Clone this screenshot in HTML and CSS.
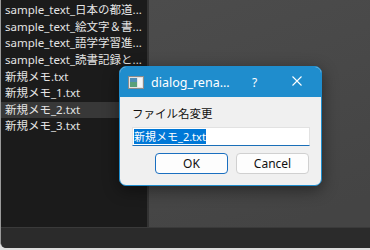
FILE: index.html
```html
<!DOCTYPE html>
<html lang="ja">
<head>
    <meta charset="UTF-8">
    <title>dialog_rename</title>
    <link rel="stylesheet" href="styles.css">
</head>
<body>
    <div class="window">
        <div class="main">
            <ul class="file-list">
                <li>sample_text_日本の都道...</li>
                <li>sample_text_絵文字＆書...</li>
                <li>sample_text_語学学習進...</li>
                <li>sample_text_読書記録と...</li>
                <li>新規メモ.txt</li>
                <li>新規メモ_1.txt</li>
                <li class="selected">新規メモ_2.txt</li>
                <li>新規メモ_3.txt</li>
            </ul>
            <div class="view"></div>
        </div>
        <div class="statusbar"></div>

        <div class="dialog">
            <div class="titlebar">
                <svg class="app-icon" width="16" height="13" viewBox="0 0 16 13">
                    <rect x="0.5" y="0.5" width="15" height="12" fill="#e4e4e4" stroke="#8c8c8c"/>
                    <rect x="2" y="2" width="7" height="9" fill="#5aa07a"/>
                    <rect x="2" y="2" width="7" height="4" fill="#4f8fb8"/>
                    <rect x="10" y="2" width="4" height="9" fill="#f6f6f6"/>
                </svg>
                <span class="title">dialog_rena...</span>
                <span class="help">?</span>
                <svg class="close" width="10" height="10" viewBox="0 0 10 10">
                    <path d="M0.5 0.5 L9.5 9.5 M9.5 0.5 L0.5 9.5" stroke="#fff" stroke-width="1.1"/>
                </svg>
            </div>
            <div class="dialog-body">
                <div class="label">ファイル名変更</div>
                <div class="input"><span class="sel">新規メモ_2.txt</span></div>
                <div class="buttons">
                    <button class="btn default">OK</button>
                    <button class="btn">Cancel</button>
                </div>
            </div>
        </div>
    </div>
</body>
</html>
```

FILE: styles.css
```css
* {
    box-sizing: border-box;
    margin: 0;
    padding: 0;
}

body {
    width: 370px;
    height: 250px;
    overflow: hidden;
    background: #dedede;
    font-family: "Noto Sans", "Noto Sans CJK JP", sans-serif;
}

.window {
    position: relative;
    width: 370px;
    height: 248px;
    display: flex;
    flex-direction: column;
    border-left: 1px solid #9a9a9a;
    border-bottom-left-radius: 6px;
    overflow: hidden;
    background: #2b2b2b;
}

.main {
    display: flex;
    height: 227px;
}

.file-list {
    list-style: none;
    width: 148px;
    padding-top: 2px;
    background: #1b1b1b;
    border-right: 2px solid #333;
}

.file-list li {
    height: 16.65px;
    line-height: 16.65px;
    padding-left: 4px;
    font-size: 11.5px;
    color: #e4e4e4;
    white-space: nowrap;
    overflow: hidden;
}

.file-list li.selected {
    background: #383838;
}

.view {
    flex: 1;
    background: linear-gradient(160deg, #4c4c4c, #444 90%);
}

.statusbar {
    flex: 1;
    background: #2b2b2b;
    border-top: 1px solid #3a3a3a;
}

/* rename dialog */
.dialog {
    position: absolute;
    left: 118px;
    top: 66px;
    width: 203px;
    height: 120px;
    border: 1px solid #1f8dcd;
    border-radius: 7px;
    background: #f0f0f0;
    overflow: hidden;
    box-shadow: 0 4px 16px rgba(0, 0, 0, 0.45);
}

.titlebar {
    display: flex;
    align-items: center;
    height: 30px;
    background: #1f8dcd;
    color: #fff;
    padding-left: 8px;
}

.app-icon {
    margin-top: 1px;
}

.title {
    margin-left: 7px;
    font-size: 12.5px;
    width: 101px;
}

.help {
    font-size: 12px;
    width: 40px;
}

.close {
    margin-top: -2px;
}

.dialog-body {
    padding: 9px 11px 0 12px;
}

.label {
    font-size: 11.5px;
    line-height: 16px;
    color: #111;
}

.input {
    margin-top: 5px;
    height: 19px;
    width: 178px;
    background: #fff;
    border: 1px solid #e2e2e2;
    border-bottom: 1px solid #1a6fb8;
    padding: 1px 1px 0 1px;
    font-size: 11px;
    line-height: 15px;
}

.sel {
    background: #0078d7;
    color: #fff;
}

.buttons {
    display: flex;
    justify-content: flex-end;
    gap: 8px;
    margin-top: 7px;
    width: 177px;
}

.btn {
    width: 73px;
    height: 21px;
    font-family: "Noto Sans", sans-serif;
    font-size: 12px;
    color: #111;
    background: #fdfdfd;
    border: 1px solid #d0d0d0;
    border-radius: 4px;
}

.btn.default {
    border: 1px solid #1a6fc0;
}
```
